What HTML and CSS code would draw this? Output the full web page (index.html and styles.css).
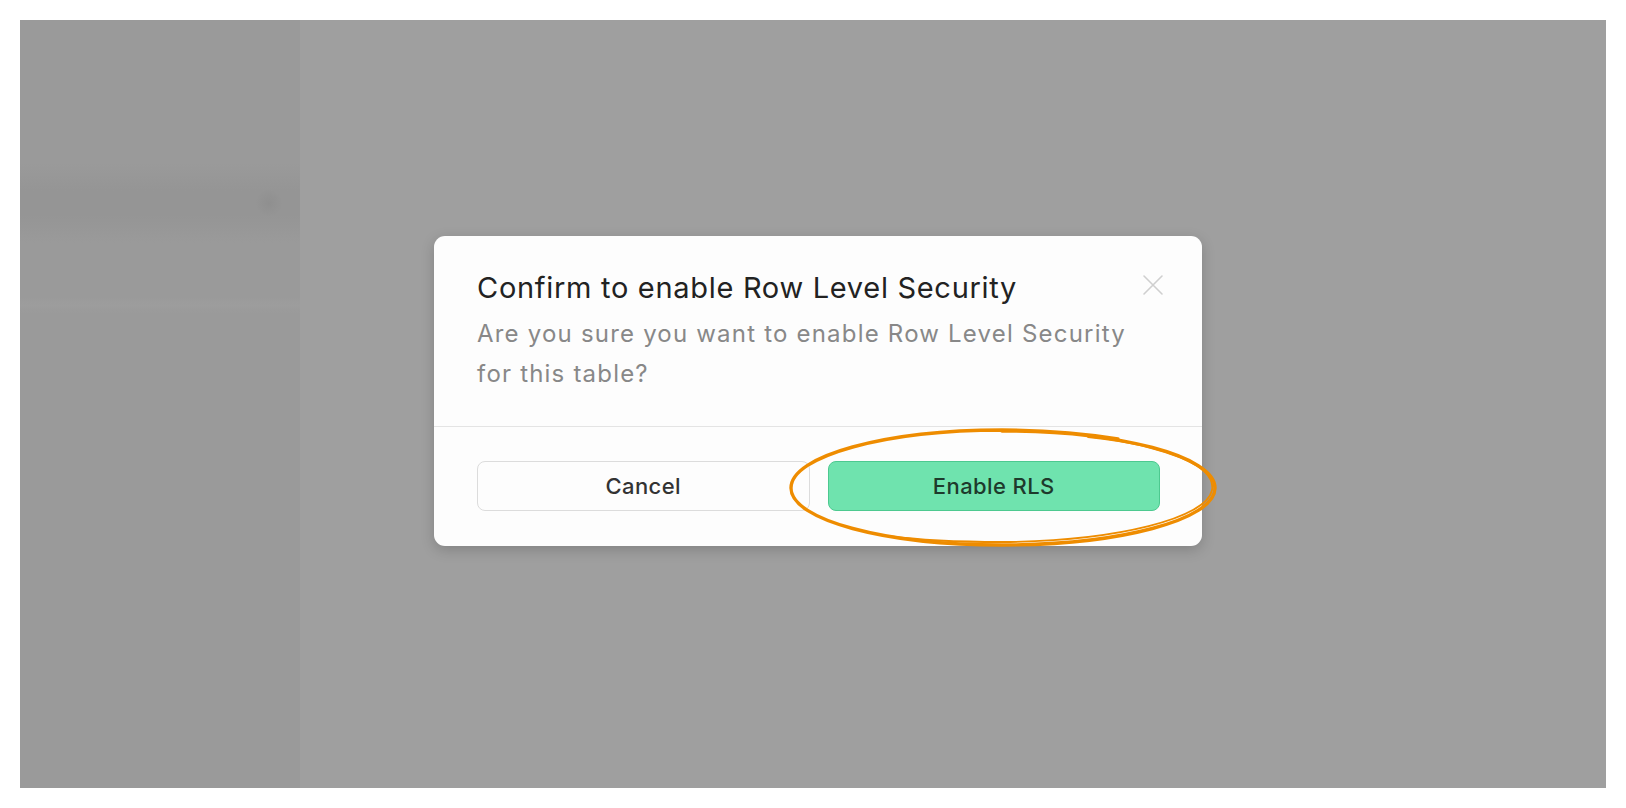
FILE: index.html
```html
<!DOCTYPE html>
<html lang="en">
<head>
<meta charset="utf-8">
<title>Confirm RLS</title>
<link rel="stylesheet" href="styles.css">
</head>
<body>
<div class="canvas">
  <aside class="sidebar">
    <div class="side-top"></div>
    <div class="side-row"><span class="side-dot"></span></div>
    <div class="side-line"></div>
  </aside>
  <main class="main"></main>

  <div class="overlay">
    <div class="dialog" role="dialog">
      <div class="dialog-head">
        <div class="head-text">
          <h2 class="title">Confirm to enable Row Level Security</h2>
          <p class="desc">Are you sure you want to enable Row Level Security<br>for this table?</p>
        </div>
        <button class="close" aria-label="Close">
          <svg width="22" height="22" viewBox="0 0 22 22"><path d="M2 2 L20 20 M20 2 L2 20" stroke="#cfcfcf" stroke-width="1.6" fill="none" stroke-linecap="round"/></svg>
        </button>
      </div>
      <div class="dialog-foot">
        <button class="btn btn-cancel">Cancel</button>
        <button class="btn btn-primary">Enable RLS</button>
      </div>
    </div>
  </div>

  <svg class="scribble" width="432" height="122" viewBox="0 0 432 122">
    <path d="M214 5 C331 5 427 30 427 62 C427 94 331 119 214 119 C97 119 3 94 3 62 C3 30 97 4 214 4 C262 4 300 8 330 13" fill="none" stroke="#ee8c00" stroke-width="3.4" stroke-linecap="round"/>
    <path d="M300 11 C385 20 428 42 424 64 C419 92 330 115 214 116 C170 116 130 114 100 110" fill="none" stroke="#ee8c00" stroke-width="1.8" stroke-linecap="round"/>
  </svg>
</div>
</body>
</html>
```
FILE: styles.css
```css
html, body {
  margin: 0;
  padding: 0;
  background: #ffffff;
}
body {
  padding: 20px;
  font-family: Inter, "Noto Sans", "Liberation Sans", sans-serif;
}
.canvas {
  position: relative;
  width: 1586px;
  height: 768px;
  display: flex;
  background: #9f9f9f;
  overflow: hidden;
}
.sidebar {
  width: 280px;
  flex: none;
  background: #9a9a9a;
  display: flex;
  flex-direction: column;
}
.side-top {
  height: 143px;
}
.side-row {
  height: 80px;
  background: linear-gradient(#9a9a9a, #959595 35%, #959595 65%, #9a9a9a);
  display: flex;
  align-items: center;
  justify-content: flex-end;
  padding-right: 18px;
}
.side-dot {
  width: 26px;
  height: 26px;
  border-radius: 50%;
  background: radial-gradient(circle, #8f8f8f 0%, #939393 50%, rgba(149,149,149,0) 75%);
}
.side-line {
  margin-top: 54px;
  height: 16px;
  background: linear-gradient(#9a9a9a, #9d9d9d, #9a9a9a);
}
.main {
  flex: 1;
  background: #9f9f9f;
}
.overlay {
  position: absolute;
  inset: 0;
  display: flex;
  align-items: flex-start;
  padding: 216px 0 0 414px;
}
.dialog {
  width: 768px;
  background: #fdfdfd;
  border-radius: 11px;
  box-shadow: 0 4px 14px rgba(0,0,0,0.18);
  overflow: hidden;
}
.dialog-head {
  display: flex;
  justify-content: space-between;
  align-items: flex-start;
  padding: 34px 38px 32px 43px;
  border-bottom: 1px solid #e4e4e4;
}
.title {
  margin: 0;
  font-size: 29px;
  font-weight: 400;
  line-height: 36px;
  color: #222222;
  letter-spacing: 0.7px;
}
.desc {
  margin: 8px 0 0;
  font-size: 24px;
  line-height: 40px;
  color: #888888;
  letter-spacing: 1.2px;
}
.close {
  margin-top: 4px;
  padding: 0;
  border: 0;
  background: none;
  width: 22px;
  height: 22px;
}
.dialog-foot {
  display: flex;
  gap: 18px;
  padding: 34px 42px 35px 43px;
}
.btn {
  flex: 1;
  height: 50px;
  border-radius: 8px;
  font-family: inherit;
  font-size: 22px;
  font-weight: 500;
  letter-spacing: 0.4px;
}
.btn-cancel {
  background: #fdfdfd;
  border: 1px solid #dcdcdc;
  color: #333333;
}
.btn-primary {
  background: #6fe3ae;
  border: 1px solid #4dc990;
  color: #1e3a2c;
}
.scribble {
  position: absolute;
  left: 768px;
  top: 406px;
}
```
